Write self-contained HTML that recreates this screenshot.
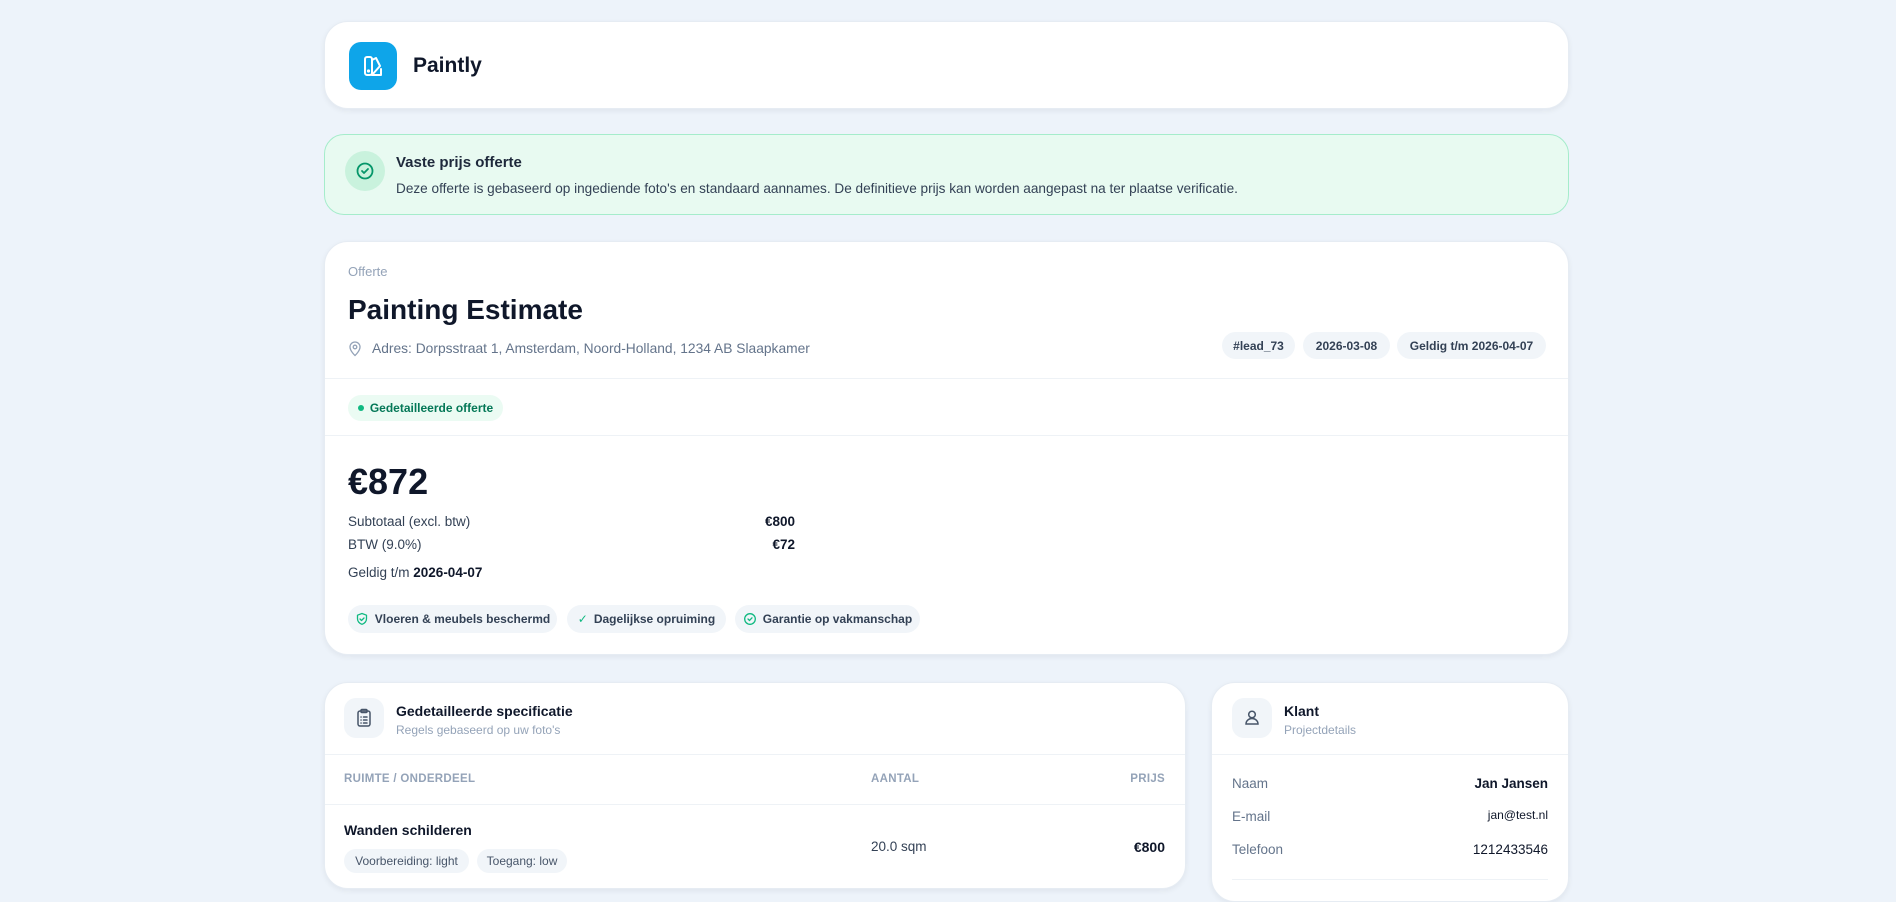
<!DOCTYPE html>
<html><head><meta charset="utf-8">
<style>
*{box-sizing:border-box;margin:0;padding:0}
body{width:1896px;height:890px;overflow:hidden;background:#edf3fa;font-family:"Liberation Sans",sans-serif;color:#0f172a;position:relative}
.card{position:absolute;background:#fff;border-radius:24px;box-shadow:0 2px 6px rgba(15,23,42,.06);border:1px solid #e6ecf3}
.abs{position:absolute;white-space:nowrap}
.pill{position:absolute;background:#f1f5f9;border-radius:14px;font-size:12px;font-weight:bold;color:#334155;display:flex;align-items:center;justify-content:center;gap:6px}
.hr{position:absolute;left:0;right:0;height:1px;background:#eef2f6}
.muted{color:#64748b}
</style></head><body>

<div class="card" style="left:324px;top:21px;width:1245px;height:88px;">
  <div style="position:absolute;left:24px;top:20px;width:48px;height:48px;border-radius:12px;background:#0ea5e9;">
    <svg width="48" height="48" viewBox="0 0 48 48" fill="none" stroke="#fff" stroke-width="2" stroke-linejoin="round" stroke-linecap="round">
      <rect x="16" y="15" width="7" height="18" rx="2"/>
      <path d="M23 18l4-2 4 8-8 9"/>
      <path d="M23 33h9v-6"/>
      <circle cx="19.5" cy="29" r="0.6" fill="#fff"/>
    </svg>
  </div>
  <div class="abs" style="left:88px;top:32px;font-size:21px;font-weight:bold;">Paintly</div>
</div>

<div style="position:absolute;left:324px;top:134px;width:1245px;height:81px;background:#e8faf1;border:1px solid #a5eccb;border-radius:20px;">
  <div style="position:absolute;left:20px;top:16px;width:40px;height:40px;border-radius:50%;background:#c9f2dd;">
    <svg width="40" height="40" viewBox="0 0 40 40" fill="none" stroke="#059669" stroke-width="1.8" stroke-linecap="round" stroke-linejoin="round"><circle cx="20" cy="20" r="7.5"/><path d="M17 20l2 2 4-4"/></svg>
  </div>
  <div class="abs" style="left:71px;top:19px;font-size:15px;font-weight:bold;color:#1e293b;">Vaste prijs offerte</div>
  <div class="abs" style="left:71px;top:46px;font-size:13.6px;color:#334155;">Deze offerte is gebaseerd op ingediende foto's en standaard aannames. De definitieve prijs kan worden aangepast na ter plaatse verificatie.</div>
</div>

<div class="card" style="left:324px;top:241px;width:1245px;height:414px;">
  <div class="abs muted" style="left:23px;top:22px;font-size:13px;color:#94a3b8;">Offerte</div>
  <div class="abs" style="left:23px;top:52px;font-size:28px;font-weight:bold;">Painting Estimate</div>
  <svg class="abs" style="left:22px;top:99px" width="16" height="16" viewBox="0 0 16 16" fill="none" stroke="#94a3b8" stroke-width="1.3"><path d="M8 14.5s-5-4.5-5-8.5a5 5 0 0110 0c0 4-5 8.5-5 8.5z"/><circle cx="8" cy="6" r="1.8"/></svg>
  <div class="abs muted" style="left:47px;top:99px;font-size:13.8px;">Adres: Dorpsstraat 1, Amsterdam, Noord-Holland, 1234 AB Slaapkamer</div>
  <div class="pill" style="left:897px;top:90px;width:73px;height:27px;">#lead_73</div>
  <div class="pill" style="left:978px;top:90px;width:87px;height:27px;">2026-03-08</div>
  <div class="pill" style="left:1072px;top:90px;width:149px;height:27px;">Geldig t/m 2026-04-07</div>
  <div class="hr" style="top:136px"></div>
  <div class="pill" style="left:23px;top:153px;width:155px;height:26px;background:#ebfbf3;color:#047857;font-size:12px;"><span style="width:6px;height:6px;border-radius:50%;background:#10b981;display:inline-block"></span>Gedetailleerde offerte</div>
  <div class="hr" style="top:193px"></div>
  <div class="abs" style="left:23px;top:219px;font-size:36px;font-weight:bold;">€872</div>
  <div class="abs" style="left:23px;top:272px;font-size:13.5px;color:#334155;">Subtotaal (excl. btw)</div>
  <div class="abs" style="right:773px;top:272px;font-size:13.5px;font-weight:bold;">€800</div>
  <div class="abs" style="left:23px;top:295px;font-size:13.5px;color:#334155;">BTW (9.0%)</div>
  <div class="abs" style="right:773px;top:295px;font-size:13.5px;font-weight:bold;">€72</div>
  <div class="abs" style="left:23px;top:323px;font-size:13.5px;color:#334155;">Geldig t/m <b style="color:#0f172a">2026-04-07</b></div>
  <div class="pill" style="left:23px;top:363px;width:209px;height:28px;"><svg width="14" height="14" viewBox="0 0 14 14" fill="none" stroke="#10b981" stroke-width="1.3" stroke-linejoin="round" stroke-linecap="round"><path d="M7 1.5l4.5 1.7v3.5c0 2.8-2 4.6-4.5 5.6-2.5-1-4.5-2.8-4.5-5.6V3.2z"/><path d="M5 7l1.5 1.5L9 6"/></svg>Vloeren &amp; meubels beschermd</div>
  <div class="pill" style="left:242px;top:363px;width:159px;height:28px;"><span style="color:#10b981;font-weight:normal">✓</span>Dagelijkse opruiming</div>
  <div class="pill" style="left:410px;top:363px;width:185px;height:28px;"><svg width="14" height="14" viewBox="0 0 14 14" fill="none" stroke="#10b981" stroke-width="1.3" stroke-linecap="round"><circle cx="7" cy="7" r="5.3"/><path d="M5 7l1.5 1.5L9 5.8"/></svg>Garantie op vakmanschap</div>
</div>

<div class="card" style="left:324px;top:682px;width:862px;height:207px;">
  <div style="position:absolute;left:19px;top:15px;width:40px;height:40px;border-radius:12px;background:#f1f5f9;">
    <svg width="40" height="40" viewBox="0 0 40 40" fill="none" stroke="#475569" stroke-width="1.5" stroke-linejoin="round" stroke-linecap="round"><rect x="14" y="13" width="12" height="15" rx="2"/><rect x="17" y="11.5" width="6" height="3" rx="1"/><path d="M17 19h.1M19.5 19h3.5M17 22h.1M19.5 22h3.5M17 25h.1M19.5 25h3.5"/></svg>
  </div>
  <div class="abs" style="left:71px;top:20px;font-size:14px;font-weight:bold;">Gedetailleerde specificatie</div>
  <div class="abs" style="left:71px;top:40px;font-size:12px;color:#94a3b8;">Regels gebaseerd op uw foto's</div>
  <div class="hr" style="top:71px"></div>
  <div class="abs" style="left:19px;top:90px;font-size:11.5px;color:#94a3b8;font-weight:bold;letter-spacing:.3px;">RUIMTE / ONDERDEEL</div>
  <div class="abs" style="left:546px;top:90px;font-size:11.5px;color:#94a3b8;font-weight:bold;letter-spacing:.3px;">AANTAL</div>
  <div class="abs" style="right:20px;top:90px;font-size:11.5px;color:#94a3b8;font-weight:bold;letter-spacing:.3px;">PRIJS</div>
  <div class="hr" style="top:121px"></div>
  <div class="abs" style="left:19px;top:139px;font-size:14px;font-weight:bold;">Wanden schilderen</div>
  <div class="pill" style="left:19px;top:166px;width:125px;height:24px;font-weight:normal;font-size:12px;color:#475569;">Voorbereiding: light</div>
  <div class="pill" style="left:152px;top:166px;width:90px;height:24px;font-weight:normal;font-size:12px;color:#475569;">Toegang: low</div>
  <div class="abs" style="left:546px;top:156px;font-size:13.5px;color:#334155;">20.0 sqm</div>
  <div class="abs" style="right:20px;top:156px;font-size:14px;font-weight:bold;">€800</div>
</div>

<div class="card" style="left:1211px;top:682px;width:358px;height:220px;">
  <div style="position:absolute;left:20px;top:15px;width:40px;height:40px;border-radius:12px;background:#f1f5f9;">
    <svg width="40" height="40" viewBox="0 0 40 40" fill="none" stroke="#475569" stroke-width="1.5" stroke-linecap="round"><circle cx="20" cy="16.5" r="3.3"/><path d="M14 26c0-3.3 2.7-5.5 6-5.5s6 2.2 6 5.5z"/></svg>
  </div>
  <div class="abs" style="left:72px;top:20px;font-size:14px;font-weight:bold;">Klant</div>
  <div class="abs" style="left:72px;top:40px;font-size:12px;color:#94a3b8;">Projectdetails</div>
  <div class="hr" style="top:71px"></div>
  <div class="abs muted" style="left:20px;top:93px;font-size:13.5px;">Naam</div>
  <div class="abs" style="right:20px;top:93px;font-size:13.5px;font-weight:bold;">Jan Jansen</div>
  <div class="abs muted" style="left:20px;top:126px;font-size:13.5px;">E-mail</div>
  <div class="abs" style="right:20px;top:125px;font-size:12px;">jan@test.nl</div>
  <div class="abs muted" style="left:20px;top:159px;font-size:13.5px;">Telefoon</div>
  <div class="abs" style="right:20px;top:159px;font-size:13.5px;">1212433546</div>
  <div style="position:absolute;left:20px;right:20px;top:196px;height:1px;background:#eef2f6"></div>
</div>
</body></html>
